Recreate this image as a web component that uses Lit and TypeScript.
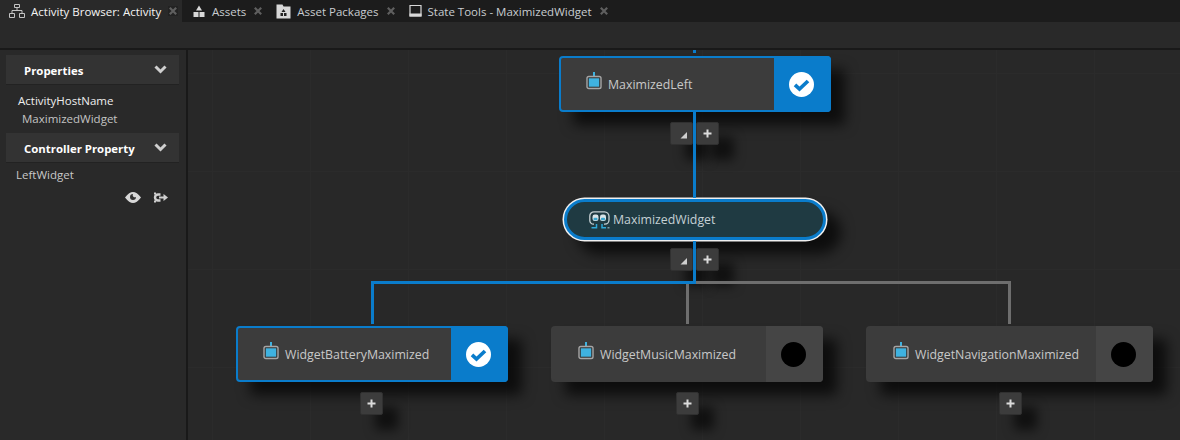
import { LitElement, html, css, svg } from "lit";
import { customElement } from "lit/decorators.js";
import { styleMap } from "lit/directives/style-map.js";

const widgetIcon = html`<svg class="wicon" width="16" height="18" viewBox="0 0 16 18">
  <rect x="7" y="0" width="2" height="4.500" fill="#3fb2e0"/>
  <rect x="1" y="4.500" width="14" height="12" rx="1.800" fill="#333" stroke="#a6a6a6" stroke-width="1.400"/>
  <rect x="2.800" y="6.300" width="10.400" height="8.400" fill="#3fb2e0"/>
</svg>`;

const stateIcon = html`<svg class="sicon" width="21" height="18" viewBox="0 0 21 18">
  <path d="M5 13.200H4.500A3.700 3.700 0 0 1 .8 9.500V5A4.200 4.200 0 0 1 5 .8H15.500A4.500 4.500 0 0 1 20 5.300V9A4.200 4.200 0 0 1 15.800 13.200H15" fill="none" stroke="#c6d0d3" stroke-width="1.300"/>
  <rect x="3.500" y="3.500" width="6" height="6.500" rx="2.200" fill="#d8e4e8"/>
  <rect x="11" y="3.500" width="6" height="6.500" rx="2.200" fill="#d8e4e8"/>
  <rect x="4.500" y="6.800" width="4" height="2.500" rx="1" fill="#3aa6cf"/>
  <rect x="12" y="6.800" width="4" height="2.500" rx="1" fill="#3aa6cf"/>
  <path d="M7.500 13v3.800H2.500M13 13v3.800H17" fill="none" stroke="#2fa8d8" stroke-width="1.500"/>
  <rect x="18.500" y="16" width="2" height="1.500" fill="#7f9aa3"/>
</svg>`;

const check = html`<svg class="chk" width="25" height="25" viewBox="0 0 25 25">
  <circle cx="12.500" cy="12.500" r="12.500" fill="#fff"/>
  <path d="M6 12.800 10.500 17 19 9" fill="none" stroke="#0a7ccb" stroke-width="3.700"/>
</svg>`;

const closeX = html`<svg class="x" width="8" height="8" viewBox="0 0 8 8"><path d="M.8.800 7.200 7.200M7.200.800.800 7.200" stroke="#5f5f5f" stroke-width="2.200"/></svg>`;

const tabIcons = {
  tree: svg`<path d="M5.500 .500h5v3h-5zM8 3.500v3M3 6.500h10M3 6.500v3M13 6.500v3M.500 9.500h5v4h-5zM10.500 9.500h5v4h-5z" fill="none" stroke="#c4c4c4"/>`,
  assets: svg`<path d="M7 1.500 10 6.500H4zM1.500 8h5v5h-5zM7.500 8h5v5h-5z" fill="#d8d8d8"/>`,
  pkg: svg`<path d="M.500 .500h6l1 2h7v12H.500z" fill="#d8d8d8"/><path d="M7.500 5 9.500 8h-4zM4.500 9H7v3H4.500zM8 9h2.500v3H8z" fill="#222"/>`,
  state: svg`<path d="M1 1.500h11v10.500H1z" fill="none" stroke="#d8d8d8" stroke-width="1.200"/><rect x=".500" y="9.500" width="12" height="3" fill="#d8d8d8"/>`,
};

const tabs = [
  { label: "Activity Browser: Activity", icon: tabIcons.tree, w: 16, active: true },
  { label: "Assets", icon: tabIcons.assets, w: 14, active: false },
  { label: "Asset Packages", icon: tabIcons.pkg, w: 15, active: false },
  { label: "State Tools - MaximizedWidget", icon: tabIcons.state, w: 13, active: false },
];

const nodes = [
  { name: "MaximizedLeft", x: 559, y: 56, w: 272, on: true },
  { name: "WidgetBatteryMaximized", x: 236, y: 326, w: 272, on: true },
  { name: "WidgetMusicMaximized", x: 551, y: 326, w: 272, on: false },
  { name: "WidgetNavigationMaximized", x: 866, y: 326, w: 287, on: false },
];

const wires = [
  { x: 693, y: 50, w: 3, h: 3, c: "b" },
  { x: 693, y: 112, w: 3, h: 86, c: "b" },
  { x: 693, y: 241, w: 3, h: 40, c: "b" },
  { x: 371, y: 281, w: 325, h: 3, c: "b" },
  { x: 696, y: 281, w: 315, h: 3, c: "g" },
  { x: 371, y: 284, w: 3, h: 40, c: "b" },
  { x: 686, y: 284, w: 3, h: 40, c: "g" },
  { x: 1008, y: 284, w: 3, h: 40, c: "g" },
];

const plus = html`<svg width="9" height="9" viewBox="0 0 9 9"><path d="M4.500 .500v8M.500 4.500h8" stroke="#dcdcdc" stroke-width="2"/></svg>`;
const corner = html`<svg width="7" height="7" viewBox="0 0 7 7"><path d="M7 0V6.500H.500z" fill="#cfcfcf"/></svg>`;

const buttons = [
  { x: 670, y: 122, k: "c" }, { x: 696, y: 122, k: "p" },
  { x: 670, y: 248, k: "c" }, { x: 696, y: 248, k: "p" },
  { x: 360, y: 392, k: "p" }, { x: 676, y: 392, k: "p" }, { x: 999, y: 392, k: "p" },
];

const px = (o: Record<string, number>) =>
  Object.fromEntries(Object.entries(o).map(([k, v]) => [k, `${v}px`]));

@customElement("app-root")
export class AppRoot extends LitElement {
  static styles = css`
    :host { display: block; width: 1180px; height: 440px; overflow: hidden; background: #292929;
      font-family: "Open Sans", "Liberation Sans", sans-serif; font-size: 11.500px; color: #d6d6d6; }
    .tabs { display: flex; height: 22px; background: #1c1c1c; }
    .tab { display: flex; align-items: center; height: 22px; padding: 0 4px 0 10px; color: #c8ccd0; white-space: nowrap; }
    .tab svg.ti { margin-right: 6px; flex: none; }
    .tab .x { margin-left: 8px; flex: none; }
    .tab.active { background: #292929; color: #f4f4f4; padding: 0 6px 0 9px; width: 182px; box-sizing: border-box; justify-content: space-between; }
    .tab.active .lab { flex: 1; }
    .tab.active .x { background: #222; outline: 1px solid #222; }
    .toolbar { height: 26px; background: #292929; border-bottom: 2px solid #191919; }
    .main { display: flex; height: 390px; }
    .side { flex: none; width: 173px; border-right: 2px solid #191919; padding: 5px 7px 0 6px; }
    .sec { height: 30px; background: #333; border-bottom: 1px solid #222; box-sizing: border-box;
      display: flex; align-items: center; justify-content: space-between; padding: 2px 12px 0 18px;
      font-weight: 700; color: #fff; font-size: 11.400px; }
    .sec svg { margin-top: -3px; }
    .p1 { margin: 7px 0 0 12px; line-height: 18px; color: #eee; }
    .p2 { margin: 0 0 5px 16px; line-height: 18px; color: #c4c4c4; }
    .p3 { margin: 3px 0 0 10px; line-height: 18px; color: #c8c8c8; height: 18px; }
    .acts { display: flex; justify-content: flex-end; gap: 12px; margin: 8px 11px 0 0; align-items: center; }
    .canvas { position: relative; flex: 1; background-color: #282828;
      background-image: linear-gradient(to right, #2b2b2b 1px, transparent 1px), linear-gradient(to bottom, #2b2b2b 1px, transparent 1px);
      background-size: 98px 98px; background-position: 24px 0, 0 23px; }
    .layer { position: absolute; left: -188px; top: -50px; width: 1180px; height: 440px; }
    .wire { position: absolute; z-index: 1; }
    .wire.b { background: #0a7ccb; }
    .wire.g { background: #6e6e6e; }
    .node { position: absolute; height: 56px; box-sizing: border-box; display: flex; border-radius: 4px;
      background: #3c3c3c; box-shadow: 14px 13px 13px rgba(0,0,0,.68); border: 2px solid #3c3c3c; }
    .node.on { border-color: #0a7ccb; }
    .label { flex: 1; display: flex; align-items: center; gap: 6px; padding-left: 25px; font-size: 12.350px; color: #c8c8c8; white-space: nowrap; }
    .wicon { margin-top: -6px; flex: none; }
    .panel { flex: none; width: 57px; display: flex; align-items: center; justify-content: center; background: #454545; margin: -2px -2px -2px 0; border-radius: 0 4px 4px 0; }
    .node.on .panel { background: #0a7ccb; }
    .chk { margin-right: 2px; }
    .dot { width: 25px; height: 25px; border-radius: 50%; background: #000; margin-right: 2px; }
    .pill { position: absolute; left: 564px; top: 199px; width: 262px; height: 41px; box-sizing: border-box;
      border-radius: 21px; background: #1f3a42; border: 3px solid #0a7ccb; box-shadow: 0 0 0 1.500px #f0f0f0, 14px 13px 13px 1px rgba(0,0,0,.68);
      display: flex; align-items: center; gap: 3px; padding-left: 22px; font-size: 12.350px; color: #c4d0d4; white-space: nowrap; }
    .btn { position: absolute; width: 23px; height: 23px; border-radius: 2px; background: #3c3c3c; border: 1px solid #303030; box-sizing: border-box;
      display: flex; align-items: center; justify-content: center; box-shadow: 15px 15px 11px rgba(0,0,0,.6); }
    .btn.c svg { margin: 3px 0 0 3px; }
  `;

  render() {
    return html`
      <div class="tabs">
        ${tabs.map(t => html`<div class="tab ${t.active ? "active" : ""}">
          <svg class="ti" width=${t.w} height="15" viewBox="0 0 ${t.w} 15">${t.icon}</svg><span class="lab">${t.label}</span>${closeX}</div>`)}
      </div>
      <div class="toolbar"></div>
      <div class="main">
        <aside class="side">
          <div class="sec">Properties ${this.chev()}</div>
          <div class="p1">ActivityHostName</div>
          <div class="p2">MaximizedWidget</div>
          <div class="sec">Controller Property ${this.chev()}</div>
          <div class="p3">LeftWidget</div>
          <div class="acts">
            <svg width="16" height="11" viewBox="0 0 16 11"><path d="M0 5.500C3 1.500 5.500 0 8 0s5 1.500 8 5.500C13 9.500 10.500 11 8 11S3 9.500 0 5.500z" fill="#d8d8d8"/><path d="M11 5a3 3 0 1 1-3-3 2.200 2.200 0 0 0 3 3z" fill="#333"/></svg>
            <svg width="15" height="11" viewBox="0 0 15 11"><path d="M7.500 2.500H5A3 3 0 0 0 5 8.500H7.500" fill="none" stroke="#d0d0d0" stroke-width="2.400"/><path d="M2 .5v2M2 8.500v2M6 5.500h6" stroke="#d0d0d0" stroke-width="2"/><path d="M10.500 2 15 5.500 10.500 9z" fill="#d0d0d0"/></svg>
          </div>
        </aside>
        <div class="canvas">
          <div class="layer">
            ${wires.map(w => html`<div class="wire ${w.c}" style=${styleMap(px({ left: w.x, top: w.y, width: w.w, height: w.h }))}></div>`)}
            ${nodes.map(n => html`<div class="node ${n.on ? "on" : ""}" style=${styleMap(px({ left: n.x, top: n.y, width: n.w }))}>
              <div class="label">${widgetIcon}${n.name}</div>
              <div class="panel">${n.on ? check : html`<div class="dot"></div>`}</div>
            </div>`)}
            <div class="pill">${stateIcon}MaximizedWidget</div>
            ${buttons.map(b => html`<div class="btn ${b.k}" style=${styleMap(px({ left: b.x, top: b.y }))}>${b.k === "p" ? plus : corner}</div>`)}
          </div>
        </div>
      </div>`;
  }

  chev() {
    return html`<svg width="13" height="9" viewBox="0 0 13 9"><path d="M1.500 1.500 6.500 6.500 11.500 1.500" fill="none" stroke="#cfcfcf" stroke-width="3"/></svg>`;
  }
}
